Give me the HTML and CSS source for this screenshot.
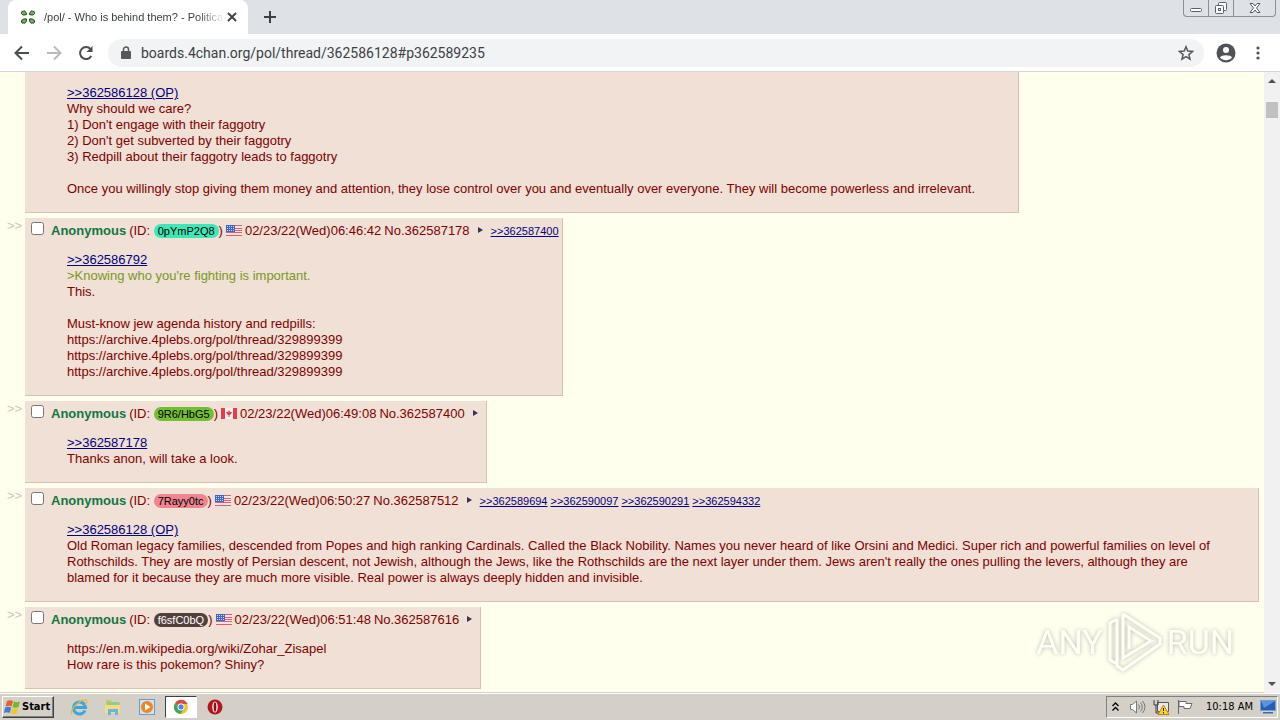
FILE: index.html
```html
<!DOCTYPE html>
<html lang="en">
<head>
    <meta charset="UTF-8">
    <meta name="viewport" content="width=device-width, initial-scale=1.0">
    <title>/pol/ - Who is behind them? - Politica</title>
    <link rel="stylesheet" href="styles.css">
</head>
<body>
    <svg class="defs" aria-hidden="true">
        <symbol id="flag-us" viewBox="0 0 16 11">
            <rect width="16" height="11" fill="#f4e4e6"/>
            <path d="M0 .5h16M0 3.500h16M0 5.500h16M0 7.500h16M0 10.500h16" stroke="#d9606a"/>
            <rect width="9" height="7" fill="#3f64c4"/>
            <path d="M1 1.500h8M1 3.500h8M1 5.500h8" stroke="#c9d8f5" stroke-dasharray="1 1"/>
        </symbol>
        <symbol id="flag-ca" viewBox="0 0 16 11">
            <rect width="16" height="11" fill="#f8f0f0"/>
            <path d="M0 0h4v11H0zM12 0h4v11h-4z" fill="#e0404c"/>
            <path d="M8 2l1 2 2 0-1 2-1 1H8.500v2h-1V7H7L6 6 5 4h2z" fill="#e0404c"/>
        </symbol>
    </svg>

    <header class="tab-strip">
        <div class="tab">
            <svg class="favicon" width="16" height="16" viewBox="0 0 16 16" fill="#79b860" stroke="#1b3317">
                <path d="M6.500 5.500C4 6.500 2 6 1.500 4.500 1 3 2 2 3 2.500 4 1 6 2 6.500 5.500zM9.500 5.500C12 6.500 14 6 14.500 4.500 15 3 14 2 13 2.500 12 1 10 2 9.500 5.500zM6.500 10C4 9.500 2 10.500 1.500 12c-.5 1.500 1 2.500 2 2C5 15 6.500 13 6.500 10zM9.500 10c2.500-.5 4.500.5 5 2 .5 1.500-1 2.500-2 2-1.500 1-3-1-3-4z"/>
            </svg>
            <span class="tab-title">/pol/ - Who is behind them? - Politica</span>
            <button class="icon-btn tab-close" aria-label="Close tab">
                <svg width="10" height="10" viewBox="0 0 10 10" stroke="#3c4043" stroke-width="1.800"><path d="M1 1l8 8M9 1L1 9"/></svg>
            </button>
        </div>
        <button class="icon-btn new-tab" aria-label="New tab">
            <svg width="12" height="12" viewBox="0 0 12 12" stroke="#3c4043" stroke-width="2"><path d="M6 0v12M0 6h12"/></svg>
        </button>
        <div class="window-controls">
            <button class="win-btn" aria-label="Minimize">
                <svg width="12" height="12" viewBox="0 0 12 12" fill="#fff" stroke="#5a606b"><rect x=".5" y="6.500" width="11" height="3" rx="1"/></svg>
            </button>
            <button class="win-btn" aria-label="Restore">
                <svg width="14" height="14" viewBox="0 0 14 14" fill="#fff" stroke="#5a606b"><rect x="4.500" y="1.500" width="8" height="8" rx="1"/><rect x="1.500" y="4.500" width="8" height="8" rx="1"/><rect x="4.500" y="7.500" width="2" height="2"/></svg>
            </button>
            <button class="win-btn win-close" aria-label="Close">
                <svg width="12" height="12" viewBox="0 0 12 12" fill="#fff" stroke="#5a606b"><path d="M1 1.500h3L6 4l2-2.500h3L7.500 6l3.500 4.500H8L6 8l-2 2.500H1L4.500 6z"/></svg>
            </button>
        </div>
    </header>

    <nav class="toolbar">
        <button class="icon-btn" aria-label="Back">
            <svg width="16" height="16" viewBox="0 0 16 16" fill="none" stroke="#4a4d51" stroke-width="2"><path d="M15 8H2M8 1.500L1.500 8 8 14.500"/></svg>
        </button>
        <button class="icon-btn" aria-label="Forward">
            <svg width="16" height="16" viewBox="0 0 16 16" fill="none" stroke="#b8babd" stroke-width="2"><path d="M1 8h13M8 1.500L14.500 8 8 14.500"/></svg>
        </button>
        <button class="icon-btn" aria-label="Reload">
            <svg width="16" height="16" viewBox="0 0 16 16" fill="none" stroke="#4a4d51" stroke-width="2"><path d="M13.300 11A6 6 0 1 1 12.500 4"/><path d="M14.500 1v6h-6z" fill="#4a4d51" stroke="none"/></svg>
        </button>
        <div class="omnibox">
            <svg width="10" height="14" viewBox="0 0 10 14"><rect y="5" width="10" height="8" rx="1" fill="#55585c"/><path d="M2.500 5V3.500a2.500 2.500 0 0 1 5 0V5" fill="none" stroke="#55585c" stroke-width="1.500"/></svg>
            <input class="url" type="text" aria-label="Address" value="boards.4chan.org/pol/thread/362586128#p362589235">
            <button class="icon-btn" aria-label="Bookmark">
                <svg width="16" height="16" viewBox="0 0 16 16" fill="none" stroke="#55585c" stroke-width="1.500"><path d="M8 1.800l1.800 4.300 4.700.4-3.600 3.100 1.100 4.600L8 11.700l-4 2.500 1.100-4.600L1.500 6.500l4.700-.4z"/></svg>
            </button>
        </div>
        <button class="icon-btn" aria-label="Profile">
            <svg width="20" height="20" viewBox="0 0 20 20"><circle cx="10" cy="10" r="9.500" fill="#4f5358"/><circle cx="10" cy="7" r="3" fill="#fff"/><path d="M4 14.500c1-3 11-3 12 0-3 3.500-9 3.500-12 0z" fill="#fff"/></svg>
        </button>
        <button class="icon-btn" aria-label="Menu">
            <svg width="4" height="14" viewBox="0 0 4 14" fill="#4f5358"><circle cx="2" cy="2" r="1.600"/><circle cx="2" cy="7" r="1.600"/><circle cx="2" cy="12" r="1.600"/></svg>
        </button>
    </nav>

    <div class="viewport">
        <main class="thread">
            <div class="reply-row">
                <span class="side-arrows"></span>
                <article class="post post-cut">
                    <blockquote class="message">
                        <a href="#p362586128">&gt;&gt;362586128 (OP)</a><br>
                        Why should we care?<br>
                        1) Don't engage with their faggotry<br>
                        2) Don't get subverted by their faggotry<br>
                        3) Redpill about their faggotry leads to faggotry<br>
                        <br>
                        Once you willingly stop giving them money and attention, they lose control over you and eventually over everyone. They will become powerless and irrelevant.
                    </blockquote>
                </article>
            </div>

            <div class="reply-row">
                <span class="side-arrows">&gt;&gt;</span>
                <article class="post" id="p362587178">
                    <div class="post-info">
                        <input type="checkbox" class="tick" aria-label="Select post 362587178">
                        <span class="name">Anonymous</span>
                        <span>(ID: <span class="uid uid-teal">0pYmP2Q8</span>)</span>
                        <svg class="flag"><use href="#flag-us"/></svg>
                        <span>02/23/22(Wed)06:46:42</span>
                        <span>No.362587178</span>
                        <a class="post-menu" href="#" aria-label="Post menu"></a>
                        <span class="backlinks"><a href="#p362587400">&gt;&gt;362587400</a></span>
                    </div>
                    <blockquote class="message">
                        <a href="#p362586792">&gt;&gt;362586792</a><br>
                        <span class="quote">&gt;Knowing who you're fighting is important.</span><br>
                        This.<br>
                        <br>
                        Must-know jew agenda history and redpills:<br>
                        https://archive.4plebs.org/pol/thread/329899399<br>
                        https://archive.4plebs.org/pol/thread/329899399<br>
                        https://archive.4plebs.org/pol/thread/329899399
                    </blockquote>
                </article>
            </div>

            <div class="reply-row">
                <span class="side-arrows">&gt;&gt;</span>
                <article class="post" id="p362587400">
                    <div class="post-info">
                        <input type="checkbox" class="tick" aria-label="Select post 362587400">
                        <span class="name">Anonymous</span>
                        <span>(ID: <span class="uid uid-green">9R6/HbG5</span>)</span>
                        <svg class="flag"><use href="#flag-ca"/></svg>
                        <span>02/23/22(Wed)06:49:08</span>
                        <span>No.362587400</span>
                        <a class="post-menu" href="#" aria-label="Post menu"></a>
                    </div>
                    <blockquote class="message">
                        <a href="#p362587178">&gt;&gt;362587178</a><br>
                        Thanks anon, will take a look.
                    </blockquote>
                </article>
            </div>

            <div class="reply-row">
                <span class="side-arrows">&gt;&gt;</span>
                <article class="post" id="p362587512">
                    <div class="post-info">
                        <input type="checkbox" class="tick" aria-label="Select post 362587512">
                        <span class="name">Anonymous</span>
                        <span>(ID: <span class="uid uid-pink">7Rayy0tc</span>)</span>
                        <svg class="flag"><use href="#flag-us"/></svg>
                        <span>02/23/22(Wed)06:50:27</span>
                        <span>No.362587512</span>
                        <a class="post-menu" href="#" aria-label="Post menu"></a>
                        <span class="backlinks">
                            <a href="#p362589694">&gt;&gt;362589694</a>
                            <a href="#p362590097">&gt;&gt;362590097</a>
                            <a href="#p362590291">&gt;&gt;362590291</a>
                            <a href="#p362594332">&gt;&gt;362594332</a>
                        </span>
                    </div>
                    <blockquote class="message">
                        <a href="#p362586128">&gt;&gt;362586128 (OP)</a><br>
                        Old Roman legacy families, descended from Popes and high ranking Cardinals. Called the Black Nobility. Names you never heard of like Orsini and Medici. Super rich and powerful families on level of Rothschilds. They are mostly of Persian descent, not Jewish, although the Jews, like the Rothschilds are the next layer under them. Jews aren't really the ones pulling the levers, although they are blamed for it because they are much more visible. Real power is always deeply hidden and invisible.
                    </blockquote>
                </article>
            </div>

            <div class="reply-row">
                <span class="side-arrows">&gt;&gt;</span>
                <article class="post" id="p362587616">
                    <div class="post-info">
                        <input type="checkbox" class="tick" aria-label="Select post 362587616">
                        <span class="name">Anonymous</span>
                        <span>(ID: <span class="uid uid-dark">f6sfC0bQ</span>)</span>
                        <svg class="flag"><use href="#flag-us"/></svg>
                        <span>02/23/22(Wed)06:51:48</span>
                        <span>No.362587616</span>
                        <a class="post-menu" href="#" aria-label="Post menu"></a>
                    </div>
                    <blockquote class="message">
                        https://en.m.wikipedia.org/wiki/Zohar_Zisapel<br>
                        How rare is this pokemon? Shiny?
                    </blockquote>
                </article>
            </div>
        </main>
        <div class="scrollbar">
            <span class="arrow-up"></span>
            <span class="thumb"></span>
            <span class="arrow-down"></span>
        </div>
        <div class="watermark">
            <span>ANY</span>
            <svg width="58" height="62" viewBox="0 0 58 62" fill="none" stroke="#fff" stroke-width="3">
                <path d="M17 3l37 24v6L17 59l-6-4V47M17 3v44l28-17-22-14v22M11 8L4 12v37l7 4V8"/>
            </svg>
            <span>RUN</span>
        </div>
    </div>

    <footer class="taskbar">
        <button class="start">
            <svg width="17" height="16" viewBox="0 0 17 16"><path d="M3 2c2-1 4-1 6 0L7.500 7.500C6 6.500 4 6.500 1.500 7.500z" fill="#e8602c"/><path d="M10 2.500c2 1 4 1 6 0L14.500 8c-2 1-4 1-6 0z" fill="#76b82a"/><path d="M1.200 8.500c2-1 4-1 6 0L5.800 14c-2-1-4-1-6 0z" fill="#3d7fd6"/><path d="M8.200 9c2 1 4 1 6 0L12.700 14.500c-2 1-4 1-6 0z" fill="#f7c52b"/></svg>
            Start
        </button>
        <button class="task" aria-label="Internet Explorer">
            <svg width="18" height="18" viewBox="0 0 18 18" fill="none"><path d="M15 12.500A6 6 0 1 1 15.500 9.500H5" stroke="#3aa5e0" stroke-width="3"/><path d="M2 16C-1 12 10 1 16 2c2 1 0 4-1 5" stroke="#e8b93c" stroke-width="1.300"/></svg>
        </button>
        <button class="task" aria-label="Explorer">
            <svg width="18" height="18" viewBox="0 0 18 18"><path d="M2 2h5l1 2h8v9H2z" fill="#dcc25a"/><path d="M3 4h12v4H3z" fill="#8ccf8a"/><path d="M1 7h15v8H1z" fill="#f3dc80"/><path d="M4 17v-6h10v6h-3v-3H7v3z" fill="#69b5de"/></svg>
        </button>
        <button class="task" aria-label="Media Player">
            <svg width="18" height="18" viewBox="0 0 18 18"><rect x="1.500" y="1.500" width="15" height="15" fill="#cfe2f3" stroke="#6a9cc8"/><circle cx="9" cy="9" r="6" fill="#ef8420"/><path d="M7 5.500v7L12.500 9z" fill="#fff"/></svg>
        </button>
        <button class="task task-active" aria-label="Chrome">
            <svg width="16" height="16" viewBox="0 0 16 16"><circle cx="8" cy="8" r="7" fill="#f6c426"/><path d="M8 8L2 4.300A7 7 0 0 1 14.500 5H8z" fill="#dd4b3e"/><path d="M8 8L2 4.300A7 7 0 0 0 7.500 15L11 9.500z" fill="#3fa65a"/><circle cx="8" cy="8" r="3.200" fill="#4a86e8" stroke="#fff"/></svg>
        </button>
        <button class="task" aria-label="Opera">
            <svg width="16" height="16" viewBox="0 0 16 16"><circle cx="8" cy="8" r="7.500" fill="#b8141c"/><ellipse cx="8" cy="8" rx="2.800" ry="5.500" fill="#f3e8e8"/><ellipse cx="8" cy="8" rx="1.300" ry="4.700" fill="#8a1016"/></svg>
        </button>
        <div class="tray">
            <svg width="7" height="10" viewBox="0 0 7 10" fill="none" stroke="#000" stroke-width="1.300"><path d="M.5 4l3-3 3 3M.5 8.500l3-3 3 3"/></svg>
            <svg class="tray-sound" width="17" height="16" viewBox="0 0 17 16" fill="none" stroke="#75787c"><path d="M1.500 5.500h2L7.500 2v12l-4-3.500h-2z" fill="#fff"/><path d="M9.500 5.500q2 2.500 0 5M11.500 3.500q3.500 4.500 0 9M13.500 2q5 6 0 12"/></svg>
            <svg width="17" height="16" viewBox="0 0 17 16"><path d="M4.500 3.500h11v9h-11z" fill="#e8e8e8" stroke="#55585c"/><path d="M1 1v5h4V1M3 6v8h3" fill="none" stroke="#3c3c3c"/><path d="M10.500 6l5.500 9.500H5z" fill="#ffd21f" stroke="#b8860b"/><path d="M10.500 9v3M10.500 13v1.500" stroke="#222"/></svg>
            <svg width="17" height="16" viewBox="0 0 17 16" fill="#fff" stroke="#66696d"><path d="M1.500 1v14M2 2.500h7v2h6l-2 5H7v-2H2z"/></svg>
            <span class="clock">10:18 AM</span>
            <svg width="16" height="14" viewBox="0 0 16 14"><rect x=".5" y=".5" width="15" height="10" fill="#245fb5" stroke="#6fa0dc"/><path d="M1 1h14L4 8z" fill="#5a94dd"/><path d="M3 12h10v1.500H3z" fill="#3b6ea5"/></svg>
        </div>
    </footer>
</body>
</html>
```
FILE: styles.css
```css
* {
    box-sizing: border-box;
}
body {
    display: flex;
    flex-direction: column;
    height: 100vh;
    margin: 0;
    overflow: hidden;
    font-family: "Liberation Sans", Arial, sans-serif;
    font-size: 13px;
    line-height: 16px;
    color: #800000;
    background-color: #ffffee;
}
button {
    font: inherit;
    padding: 0;
}
svg {
    flex: none;
}
.defs {
    position: absolute;
    width: 0;
    height: 0;
}
.icon-btn {
    display: flex;
    align-items: center;
    justify-content: center;
    flex: none;
    border: none;
    background: none;
}

/* Browser window */
.tab-strip {
    display: flex;
    flex: none;
    height: 34px;
    padding-left: 8px;
    background-color: #dee1e6;
}
.tab {
    display: flex;
    align-items: center;
    width: 240px;
    padding: 0 11px 0 12px;
    border-radius: 8px 8px 0 0;
    background-color: #fff;
}
.tab-title {
    flex: 1;
    margin: 0 2px 0 8px;
    overflow: hidden;
    white-space: nowrap;
    font-size: 11px;
    color: #3c4043;
    -webkit-mask-image: linear-gradient(to right, #000 85%, transparent);
    mask-image: linear-gradient(to right, #000 85%, transparent);
}
.new-tab {
    width: 44px;
}
.window-controls {
    display: flex;
    height: 17px;
    margin: 0 4px 0 auto;
    border: 1px solid #8b8f98;
    border-top: none;
    border-radius: 0 0 4px 4px;
}
.win-btn {
    display: flex;
    align-items: center;
    justify-content: center;
    width: 25px;
    border: none;
    border-right: 1px solid #8b8f98;
    background: none;
}
.win-close {
    width: 41px;
    border-right: none;
}
.toolbar {
    display: flex;
    align-items: center;
    flex: none;
    gap: 12px;
    height: 38px;
    padding: 0 12px;
    border-bottom: 1px solid #d5d7d5;
    background-color: #fff;
}
.toolbar > .icon-btn {
    width: 20px;
}
.omnibox {
    display: flex;
    align-items: center;
    flex: 1;
    gap: 10px;
    height: 28px;
    padding: 0 10px 0 13px;
    border-radius: 14px;
    background-color: #f1f3f4;
}
.url {
    flex: 1;
    min-width: 0;
    padding: 0;
    border: none;
    outline: none;
    background: none;
    font-family: Roboto, sans-serif;
    font-size: 14px;
    color: #3c4043;
}

/* Thread */
.viewport {
    display: flex;
    flex: 1;
    min-height: 0;
    position: relative;
}
.thread {
    display: flex;
    flex-direction: column;
    flex: 1;
    gap: 5px;
    min-width: 0;
    padding-right: 5px;
    overflow: hidden;
}
.reply-row {
    display: flex;
    flex: none;
}
.side-arrows {
    flex: none;
    width: 25px;
    padding-left: 7px;
    color: #d5c4b5;
}
.post {
    padding: 4px 3px 0 6px;
    border: 1px solid #d9bfb7;
    border-top: none;
    border-left: none;
    background-color: #f0e0d6;
}
.post-cut {
    padding-top: 13px;
}
.post-info {
    display: flex;
    align-items: center;
    gap: 3px;
    height: 17px;
    margin-bottom: 13px;
    white-space: nowrap;
}
.tick {
    width: 13px;
    height: 13px;
    margin: 0 4px 4px 0;
}
.name {
    font-weight: bold;
    color: #117743;
}
.uid {
    display: inline-block;
    height: 14px;
    padding: 0 4px;
    border-radius: 7px;
    font-size: 11px;
    line-height: 14px;
    color: #000;
}
.uid-teal {
    background-color: #3be8b8;
}
.uid-green {
    background-color: #73bf34;
}
.uid-pink {
    background-color: #ee8590;
}
.uid-dark {
    background-color: #52403f;
    color: #fff;
}
.flag {
    width: 16px;
    height: 11px;
}
.post-menu {
    width: 5px;
    height: 6px;
    margin: 0 5px 2px;
    border: 3px solid transparent;
    border-left: 5px solid #34345c;
    border-right: none;
}
a {
    color: #000080;
}
.backlinks {
    display: flex;
    gap: 3px;
    font-size: 11px;
}
.message {
    margin: 0;
    padding: 0 40px 15px 36px;
}
.quote {
    color: #789922;
}

.scrollbar {
    display: flex;
    flex-direction: column;
    align-items: center;
    flex: none;
    width: 16px;
    padding: 7px 0;
    background-color: #f1f1f1;
}
.arrow-up,
.arrow-down {
    border: 4px solid transparent;
}
.arrow-up {
    border-top: none;
    border-bottom-color: #505050;
}
.arrow-down {
    margin-top: auto;
    border-bottom: none;
    border-top-color: #505050;
}
.thumb {
    width: 12px;
    height: 16px;
    margin-top: 19px;
    background-color: #c1c1c1;
}
.watermark {
    display: flex;
    align-items: center;
    gap: 3px;
    position: absolute;
    right: 46px;
    bottom: 20px;
    font-family: Roboto, sans-serif;
    font-size: 34px;
    line-height: 40px;
    color: #fff;
    opacity: 0.6;
    filter: drop-shadow(0 0 2px #8a8a80);
}

/* Taskbar */
.taskbar {
    display: flex;
    align-items: center;
    flex: none;
    height: 27px;
    padding: 0 2px;
    border-top: 1px solid #fff;
    box-shadow: 0 -1px 0 #d4d0c8;
    background-color: #d4d0c8;
    font-family: "DejaVu Sans Condensed", "DejaVu Sans", sans-serif;
    font-size: 11px;
    color: #000;
}
.start {
    display: flex;
    align-items: center;
    gap: 1px;
    height: 22px;
    margin-right: 9px;
    padding: 0 3px 0 1px;
    border: 1px solid;
    border-color: #fff #404040 #404040 #fff;
    box-shadow: inset -1px -1px 0 #808080;
    background-color: #d4d0c8;
    font-weight: bold;
}
.task {
    display: flex;
    align-items: center;
    justify-content: center;
    width: 32px;
    height: 22px;
    margin-right: 2px;
    border: 1px solid transparent;
    background: none;
}
.task-active {
    border-color: #404040 #fff #fff #404040;
    background-color: #fff;
}
.tray {
    display: flex;
    align-items: center;
    gap: 7px;
    height: 22px;
    margin-left: auto;
    padding: 0 1px 0 5px;
    border: 1px solid;
    border-color: #808080 #fff #fff #808080;
}
.tray-sound {
    margin-left: 3px;
}
.clock {
    margin-left: 5px;
}
```
